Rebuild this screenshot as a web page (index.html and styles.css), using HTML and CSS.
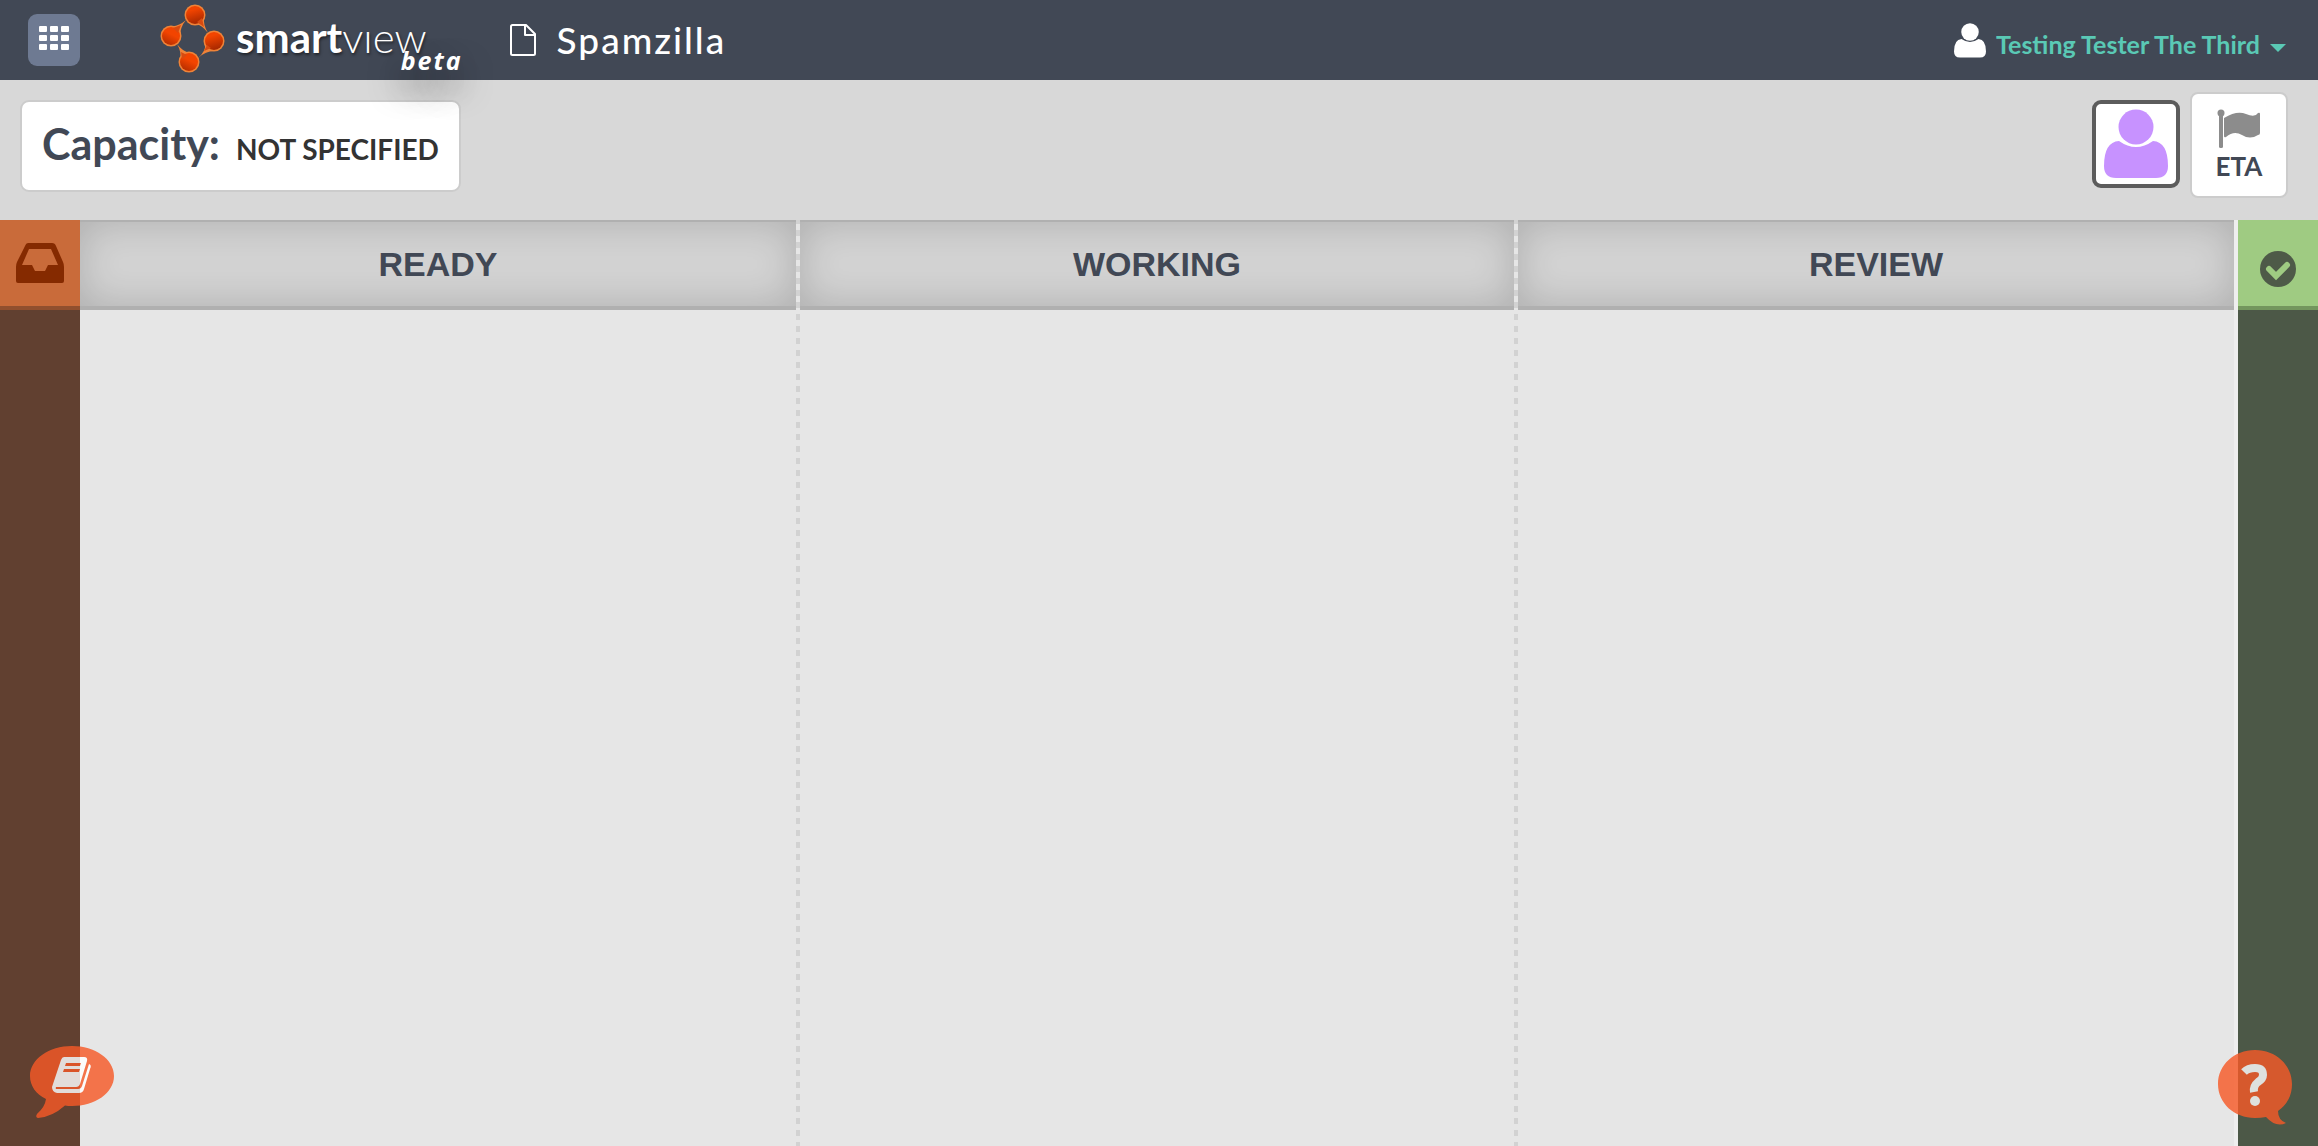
FILE: index.html
```
<!DOCTYPE html>
<html lang="en">
<head>
<meta charset="utf-8">
<meta name="viewport" content="width=device-width, initial-scale=1">
<title>Spamzilla</title>
<link rel="stylesheet" href="styles.css">
</head>
<body>
<header class="topbar">
  <button class="apps" type="button" aria-label="Apps">
    <svg width="30" height="24" viewBox="0 0 30 24" fill="#fff" aria-hidden="true">
      <rect width="8" height="6" rx="1"/><rect x="11" width="8" height="6" rx="1"/><rect x="22" width="8" height="6" rx="1"/>
      <rect y="9" width="8" height="6" rx="1"/><rect x="11" y="9" width="8" height="6" rx="1"/><rect x="22" y="9" width="8" height="6" rx="1"/>
      <rect y="18" width="8" height="6" rx="1"/><rect x="11" y="18" width="8" height="6" rx="1"/><rect x="22" y="18" width="8" height="6" rx="1"/>
    </svg>
  </button>
  <a class="brand" href="#" aria-label="smartview beta">
    <svg class="brand-mark" width="66" height="70" viewBox="0 0 66 70" aria-hidden="true">
      <defs>
        <linearGradient id="down" x1="0" y1="0" x2=".3" y2="1"><stop offset=".3" stop-color="#f24400"/><stop offset="1" stop-color="#ac2a00"/></linearGradient>
        <linearGradient id="up" x1=".2" y1="1" x2=".7" y2="0"><stop offset="0" stop-color="#b02c00"/><stop offset=".6" stop-color="#f24400"/></linearGradient>
      </defs>
      <g fill="#ef8338">
        <circle cx="35" cy="12" r="10.500"/><path d="M36 21Q42 22 48 30Q43 22 44 14Z"/>
        <circle cx="11" cy="33" r="10.500"/><path d="M11 23Q18 24 26 17Q20 24 20 34Z"/>
        <circle cx="54" cy="38" r="10.500"/><path d="M45 41Q46 48 38 55Q46 48 54 48Z"/>
        <circle cx="29" cy="59" r="10.500"/><path d="M20 58Q22 49 17 41Q22 48 30 50Z"/>
      </g>
      <circle cx="35" cy="12" r="9" fill="url(#down)"/><circle cx="11" cy="33" r="9" fill="url(#up)"/>
      <circle cx="54" cy="38" r="9" fill="url(#down)"/><circle cx="29" cy="59" r="9" fill="url(#up)"/>
      <path fill="#d84a10" d="M37 19 44 24 42 15zM13 25 21 22 18 30zM47 42 44 48 51 45zM22 56 21 49 27 52z"/>
    </svg>
    <span class="wordmark"><b>smart</b>vıew</span>
    <span class="beta">beta</span>
  </a>
  <h1 class="project">
    <svg width="26" height="32" viewBox="0 0 26 32" fill="none" stroke="#fff" stroke-width="2" stroke-linejoin="round" aria-hidden="true"><path d="M1 2.500Q1 1 2.500 1H16L25 10V29.500Q25 31 23.500 31H2.500Q1 31 1 29.500ZM15 1V11H25"/></svg>
    <span>Spamzilla</span>
  </h1>
  <button class="account" type="button">
    <svg width="32" height="35" viewBox="0 0 64 70" fill="#fff" aria-hidden="true"><circle cx="32" cy="18" r="17.500"/><path d="M15 32Q0 33 0 57Q0 69 12 69H52Q64 69 64 57Q64 33 49 32Q32 44 15 32Z"/></svg>
    <span>Testing Tester The Third</span>
    <svg class="caret" width="16" height="8" viewBox="0 0 16 8" fill="#5ac9b5" aria-hidden="true"><path d="M0 0H16L8 8Z"/></svg>
  </button>
</header>

<section class="toolbar">
  <p class="capacity"><span class="capacity-label">Capacity:</span><span class="capacity-value">NOT SPECIFIED</span></p>
  <button class="avatar" type="button" aria-label="Member">
    <svg width="64" height="70" viewBox="0 0 64 70" fill="#c792ff" aria-hidden="true"><circle cx="32" cy="18" r="17.500"/><path d="M15 32Q0 33 0 57Q0 69 12 69H52Q64 69 64 57Q64 33 49 32Q32 44 15 32Z"/></svg>
  </button>
  <button class="eta" type="button">
    <svg width="42" height="40" viewBox="1 0 42 40" fill="#8c8c8c" aria-hidden="true"><circle cx="4" cy="4" r="3.500"/><rect x="2" y="5" width="4" height="34" rx="1.500"/><path d="M7 9Q20 1 29 5T41 4Q43 3 43 5V24Q43 26 41 26Q33 31 25 26T9 28Q7 29 7 27Z"/></svg>
    <span>ETA</span>
  </button>
</section>

<main class="board">
  <section class="rail backlog" aria-label="Inbox">
    <header class="rail-head">
      <svg width="48" height="40" viewBox="0 0 48 40" aria-hidden="true"><path fill="#852a00" fill-rule="evenodd" d="M12 0H36Q39 0 40 3L47 19Q48 21 48 24V38Q48 40 46 40H2Q0 40 0 38V24Q0 21 1 19L9 3Q10 0 12 0ZM13 6 6 22H16L19 28H29L32 22H42L35 6Z"/></svg>
    </header>
  </section>
  <section class="column"><h2>READY</h2></section>
  <section class="column"><h2>WORKING</h2></section>
  <section class="column last"><h2>REVIEW</h2></section>
  <section class="rail done" aria-label="Done">
    <header class="rail-head">
      <svg width="36" height="36" viewBox="0 0 36 36" aria-hidden="true"><circle cx="18" cy="18" r="18" fill="#4e5a48"/><path fill="none" stroke="#9fcb82" stroke-width="6" stroke-linejoin="miter" stroke-linecap="round" d="M9 18 16 25 27 14"/></svg>
    </header>
  </section>
</main>

<button class="bubble guide" type="button" aria-label="Guide">
  <svg width="84" height="72" viewBox="0 0 84 72" aria-hidden="true">
    <path fill="#f65a28" d="M42 0C65 0 84 13 84 30S65 60 42 60Q38 60 35 59.500Q22 71 8 72Q5 71 7 68Q15 61 16 53C6 48 0 40 0 30C0 13 19 0 42 0Z"/>
    <path fill="#fff" fill-rule="evenodd" d="M34 11H54Q58 11 57 15L50 38Q49 41 46 41H26Q25 43 27 43H48Q51 43 52 40L59 18Q62 19 60 23L54 43Q53 47 49 47H27Q22 46 22 41L31 14Q32 11 34 11ZM36 17 35 20H50L51 17ZM34 23 33 26H49L50 23Z"/>
  </svg>
</button>
<button class="bubble help" type="button" aria-label="Help">
  <svg width="74" height="76" viewBox="0 0 74 76" aria-hidden="true">
    <path fill="#f65a28" d="M37 0C58 0 74 15 74 34Q74 51 60 61Q60 70 68 73Q58 78 48 67Q43 68 37 68C16 68 0 53 0 34S16 0 37 0Z"/>
    <path fill="none" stroke="#fff" stroke-width="8" d="M26 22Q30 18 37 18Q45 18 45 25Q45 29 40 32Q35 36 36 42"/><circle cx="37" cy="51" r="5" fill="#fff"/>
  </svg>
</button>
</body>
</html>
```
FILE: styles.css
```
* { box-sizing: border-box; }
body {
  margin: 0;
  min-height: 100vh;
  display: flex;
  flex-direction: column;
  background: #e6e6e6;
  color: #414855;
  font-family: Lato, "Liberation Sans", sans-serif;
}
button { border: 0; padding: 0; background: none; font: inherit; color: inherit; cursor: pointer; }
svg { display: block; flex: none; overflow: visible; }
h1, h2, p { margin: 0; }

.topbar {
  height: 80px;
  padding: 0 32px 0 28px;
  display: flex;
  align-items: center;
  background: #414855;
}
.apps {
  width: 52px;
  height: 52px;
  padding: 12px 11px 16px;
  border-radius: 9px;
  background: #6e7a92;
}
.brand {
  position: relative;
  height: 80px;
  margin-left: 80px;
  display: flex;
  align-items: center;
  gap: 10px;
  color: #fff;
  text-decoration: none;
}
.brand-mark { margin-bottom: 4px; }
.wordmark {
  padding-bottom: 6px;
  font-size: 42px;
  font-weight: 300;
  line-height: 56px;
  text-shadow: 1px 2px 3px rgba(0, 0, 0, .5);
}
.wordmark b { font-weight: 700; }
.beta {
  position: absolute;
  right: -36px;
  bottom: 4px;
  font: italic 700 25px/32px "Open Sans", sans-serif;
  letter-spacing: 2px;
  text-shadow: 0 16px 32px rgba(0, 0, 0, .7);
}
.project {
  margin-left: 83px;
  display: flex;
  align-items: center;
  gap: 21px;
  color: #fff;
  font-size: 37px;
  font-weight: 500;
  line-height: 44px;
  letter-spacing: 2px;
}
.account {
  margin-left: auto;
  display: flex;
  align-items: center;
  gap: 10px;
  color: #5ac9b5;
  font-size: 25px;
  font-weight: 700;
  line-height: 28px;
}
.account span { padding-top: 8px; }
.caret { margin-top: 16px; }

.toolbar {
  height: 140px;
  padding: 12px 30px 0 20px;
  display: flex;
  align-items: flex-start;
  gap: 10px;
  background: #d8d8d8;
}
.capacity {
  height: 92px;
  margin: 8px auto 0 0;
  padding: 0 20px;
  display: flex;
  align-items: baseline;
  gap: 16px;
  border: 2px solid #ccc;
  border-radius: 9px;
  background: #fff;
  font-weight: 700;
  line-height: 84px;
}
.capacity-label { font-size: 43px; }
.capacity-value { color: #333; font-size: 28px; }
.avatar {
  width: 88px;
  height: 88px;
  margin-top: 8px;
  padding: 5px 8px;
  border: 4px solid #5c5c5c;
  border-radius: 9px;
  background: #fff;
}
.eta {
  width: 98px;
  height: 106px;
  display: flex;
  flex-direction: column;
  align-items: center;
  justify-content: center;
  gap: 2px;
  border: 2px solid #ccc;
  border-radius: 8px;
  background: #fff;
  font-size: 26px;
  font-weight: 700;
  line-height: 30px;
}

/* The middle lane gives up the width of one divider; the outer two share the rest. */
.board {
  flex: 1;
  display: grid;
  grid-template-columns: 80px 1fr calc((100% - 164px) / 3) 1fr 80px;
}
.rail-head {
  height: 90px;
  display: flex;
  align-items: center;
  justify-content: center;
  border-bottom: 4px solid;
}
.backlog { background: #614030; }
.backlog .rail-head { background: #c96b3a; border-color: #914f2e; }
.done { background: #4c5847; }
.done .rail-head { padding-top: 12px; background: #9fcb82; border-color: #73965d; }
.column {
  padding-right: 4px;
  background: repeating-linear-gradient(#d2d2d2 0 4px, #e6e6e6 4px 10px, #d2d2d2 10px 12px) right / 4px 100% no-repeat;
}
.column.last { background: linear-gradient(#eee, #eee) right / 4px 100% no-repeat; }
.column h2 {
  height: 90px;
  border: solid #b0b0b0;
  border-width: 2px 0 4px;
  background: #d3d3d3;
  box-shadow: inset 0 0 40px rgba(0, 0, 0, .18);
  font: 700 34px/84px "Liberation Sans", Arial, sans-serif;
  text-align: center;
}

.bubble { position: fixed; opacity: .82; }
.guide { left: 30px; bottom: 28px; }
.help { right: 26px; bottom: 20px; }
```
